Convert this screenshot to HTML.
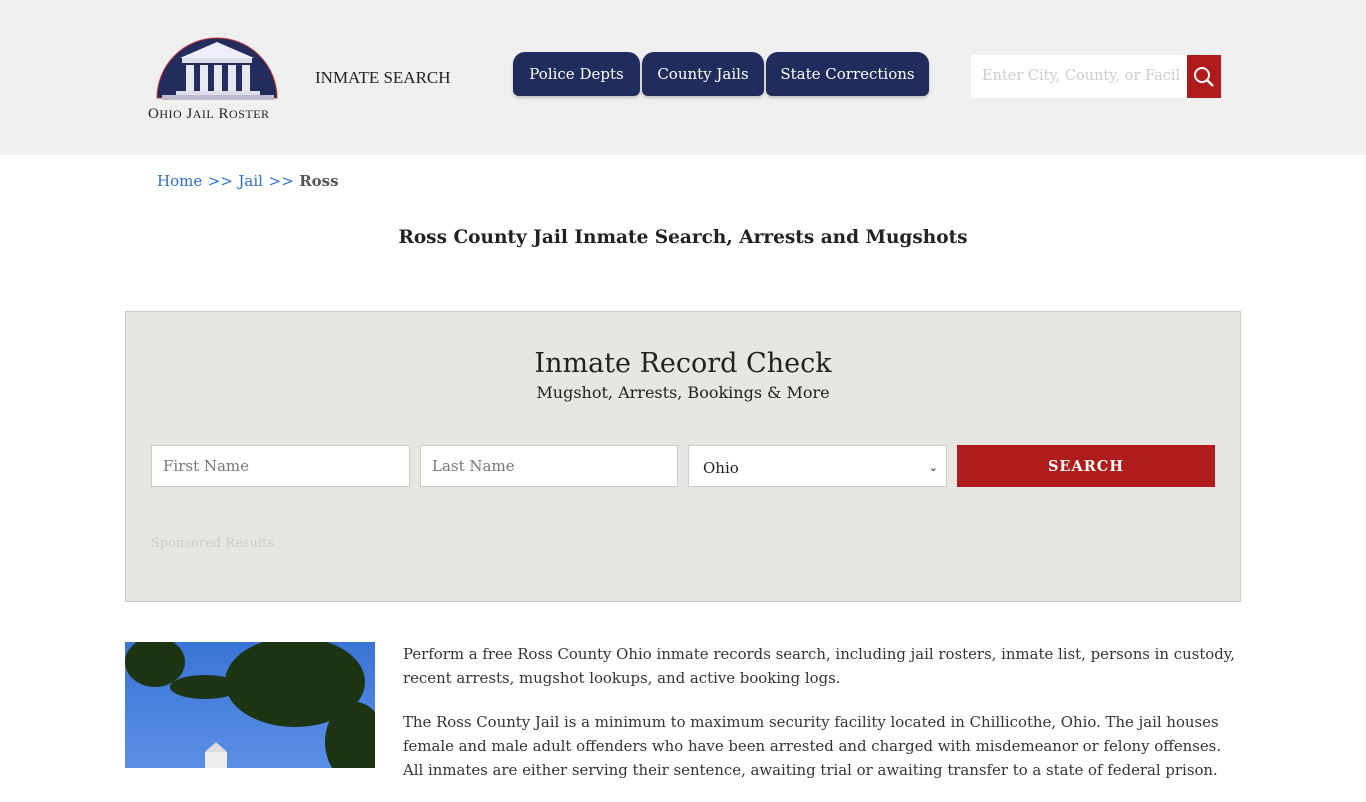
<!DOCTYPE html>
<html><head><meta charset="utf-8"><style>
*{box-sizing:border-box;margin:0;padding:0}
body{width:1366px;height:768px;overflow:hidden;background:#fff;font-family:"DejaVu Serif","Liberation Serif",serif;color:#333}
.hdr{height:155px;background:#f0f0f0;position:relative}
.logo{position:absolute;left:146px;top:34px}
.ins{position:absolute;left:315px;top:68px;font-family:"Liberation Serif",serif;font-size:17px;color:#222}
.tab{position:absolute;top:52px;height:44px;background:#202c5c;color:#fff;border-radius:12px 12px 6px 6px;font-size:15px;line-height:44px;text-align:center;box-shadow:0 2px 3px rgba(0,0,0,.2)}
.srch{position:absolute;left:971px;top:55px;width:216px;height:43px;background:#fff;color:#ccc;font-size:14.5px;line-height:43px;padding-left:11px;white-space:nowrap;overflow:hidden}
.sb{position:absolute;left:1187px;top:55px;width:34px;height:43px;background:#b01c1c}
.bc{position:absolute;left:157px;top:172px;font-size:15px;color:#2a6fc9;word-spacing:-2px}
.bc b{color:#555;font-weight:bold}
h1{position:absolute;left:0;width:1366px;top:227px;text-align:center;font-size:18.5px;font-weight:bold;color:#222}
.box{position:absolute;left:125px;top:311px;width:1116px;height:291px;background:#e8e6e1;border:1px solid #ccc}
.box h2{position:absolute;top:36px;width:100%;text-align:center;font-weight:normal;font-size:27px;color:#222}
.box p{position:absolute;top:71px;width:100%;text-align:center;font-size:16px;color:#222}
.in{position:absolute;top:133px;height:42px;background:#fff;border:1px solid #ccc;font-size:15px;color:#777;line-height:40px;padding-left:11px}
.btn{position:absolute;left:831px;top:133px;width:258px;height:42px;background:#b01c1c;color:#fff;font-size:14.5px;font-weight:bold;letter-spacing:1px;text-align:center;line-height:44px}
.sp{position:absolute;left:25px;top:224px;font-size:13px;color:#ccc}
.img{position:absolute;left:125px;top:642px;width:250px;height:126px;background:linear-gradient(180deg,#3a74d6,#5a8fe6);overflow:hidden}
.txt{position:absolute;left:403px;top:642px;width:840px;font-size:14.9px;line-height:24px;color:#333}
.txt p{margin-bottom:20px}
</style></head><body>
<div class="hdr">
<svg class="logo" width="145" height="90" viewBox="0 0 145 90">
<path d="M11 64 A60 60 0 0 1 131 64 Z" fill="#222d5e" stroke="#c33" stroke-width="1"/>
<polygon points="34,24 71,8 108,24" fill="#eef"/>
<rect x="36" y="24" width="70" height="5" fill="#dde"/>
<g fill="#e8e8f0"><rect x="40" y="31" width="8" height="26"/><rect x="54" y="31" width="8" height="26"/><rect x="68" y="31" width="8" height="26"/><rect x="82" y="31" width="8" height="26"/><rect x="96" y="31" width="8" height="26"/></g>
<rect x="30" y="57" width="84" height="4" fill="#dde"/>
<rect x="16" y="61" width="112" height="5" fill="#bbc"/>
<text x="2" y="84" font-family="Liberation Serif" font-size="15" fill="#222" letter-spacing="0.5">O<tspan font-size="12">HIO</tspan> J<tspan font-size="12">AIL</tspan> R<tspan font-size="12">OSTER</tspan></text>
</svg>
<div class="ins">INMATE SEARCH</div>
<div class="tab" style="left:513px;width:127px">Police Depts</div>
<div class="tab" style="left:642px;width:122px">County Jails</div>
<div class="tab" style="left:766px;width:163px">State Corrections</div>
<div class="srch">Enter City, County, or Facil</div>
<div class="sb"><svg width="34" height="43"><circle cx="15" cy="20" r="7" fill="none" stroke="#fff" stroke-width="2"/><line x1="20" y1="25" x2="26" y2="31" stroke="#fff" stroke-width="2.5"/></svg></div>
</div>
<div class="bc">Home &nbsp;&gt;&gt;&nbsp; Jail &nbsp;&gt;&gt;&nbsp; <b>Ross</b></div>
<h1>Ross County Jail Inmate Search, Arrests and Mugshots</h1>
<div class="box">
<h2>Inmate Record Check</h2>
<p>Mugshot, Arrests, Bookings &amp; More</p>
<div class="in" style="left:25px;width:259px">First Name</div>
<div class="in" style="left:294px;width:258px">Last Name</div>
<div class="in" style="left:562px;width:259px;color:#222;line-height:44px;padding-left:14px">Ohio<span style="position:absolute;right:8px;font-size:11px">&#8964;</span></div>
<div class="btn">SEARCH</div>
<div class="sp">Sponsored Results</div>
</div>
<div class="img"><svg width="250" height="126"><g fill="#1d3412"><ellipse cx="30" cy="20" rx="30" ry="25"/><ellipse cx="170" cy="40" rx="70" ry="45"/><ellipse cx="230" cy="100" rx="30" ry="40"/><ellipse cx="80" cy="45" rx="35" ry="12"/></g><rect x="80" y="110" width="22" height="20" fill="#eee"/><polygon points="80,110 91,100 102,110" fill="#ddd"/></svg></div>
<div class="txt">
<p>Perform a free Ross County Ohio inmate records search, including jail rosters, inmate list, persons in custody, recent arrests, mugshot lookups, and active booking logs.</p>
<p>The Ross County Jail is a minimum to maximum security facility located in Chillicothe, Ohio. The jail houses female and male adult offenders who have been arrested and charged with misdemeanor or felony offenses. All inmates are either serving their sentence, awaiting trial or awaiting transfer to a state of federal prison.</p>
</div>
</body></html>
